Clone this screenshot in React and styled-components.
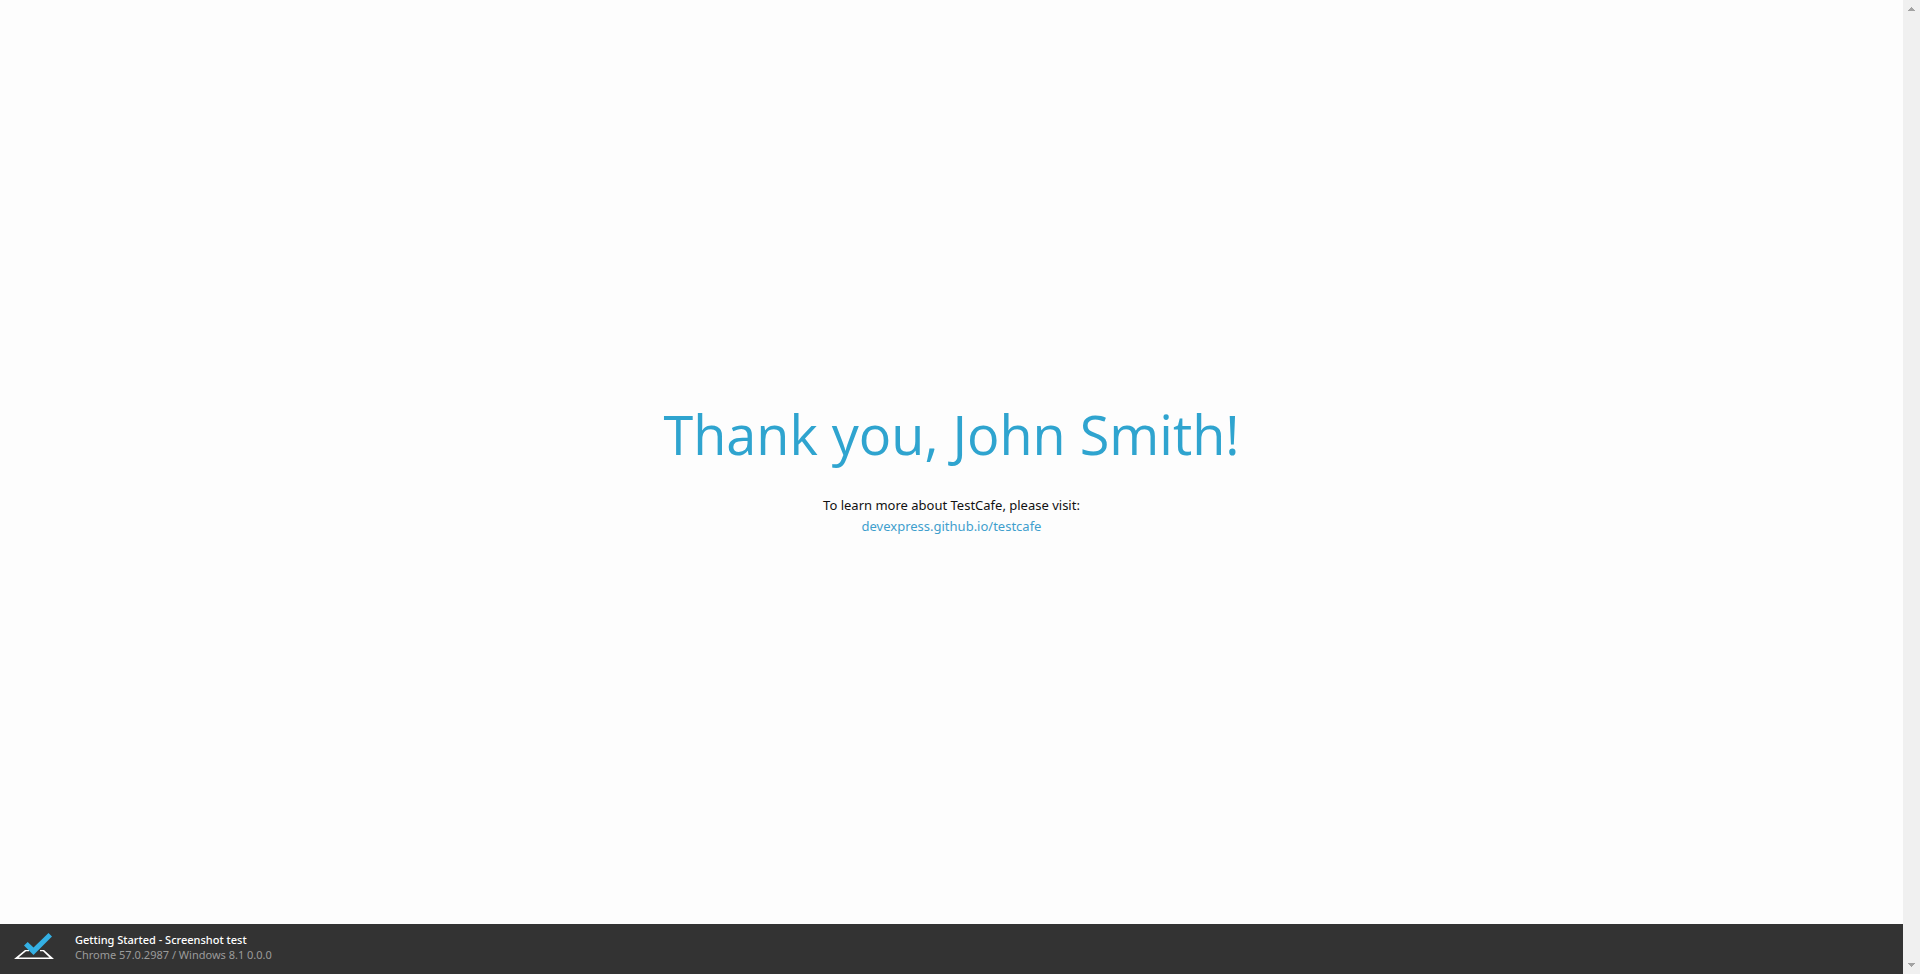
import React from 'react';
import styled, { createGlobalStyle } from 'styled-components';

const GlobalStyle = createGlobalStyle`
  body {
    margin: 0;
    background: #fdfdfd;
    color: #111;
    font-family: 'Open Sans', 'Noto Sans', sans-serif;
  }
`;

const Window = styled.div`
  display: flex;
  min-height: 100vh;
`;

const Page = styled.div`
  flex: 1;
  display: flex;
  flex-direction: column;
`;

const Content = styled.main`
  flex: 1;
  display: flex;
  flex-direction: column;
  align-items: center;
  justify-content: center;
  padding-top: 8px;
  text-align: center;
`;

const Title = styled.h1`
  margin: 0 0 23px;
  font-size: 54px;
  font-weight: 400;
  line-height: 76px;
  color: #2fa4cf;
`;

const Note = styled.p`
  margin: 0;
  font-family: 'Noto Sans', 'Open Sans', sans-serif;
  font-size: 13px;
  line-height: 21px;
`;

const SiteLink = styled.a`
  display: block;
  color: #3f9fcd;
  text-decoration: none;
`;

const StatusBar = styled.footer`
  display: flex;
  align-items: center;
  box-sizing: border-box;
  height: 50px;
  padding: 0 14px 5px;
  gap: 20px;
  background: #333;
`;

const Logo = styled.svg`
  display: block;
  width: 41px;
  height: 28px;
`;

const StatusText = styled.div`
  font-family: 'Noto Sans', 'Open Sans', sans-serif;
  font-size: 11px;
  line-height: 15px;
  color: #9b9b9b;
`;

const TestName = styled.div`
  font-weight: 500;
  color: #fff;
`;

const ScrollTrack = styled.div`
  width: 17px;
  box-sizing: border-box;
  padding: 7px 0;
  display: flex;
  flex-direction: column;
  align-items: center;
  justify-content: space-between;
  background: #f0f0f0;
`;

const Arrow = styled.svg`
  display: block;
  width: 7px;
  height: 4px;
  fill: #a3a3a3;
`;

export default function App() {
  return (
    <>
      <GlobalStyle />
      <Window>
        <Page>
          <Content>
            <Title>Thank you, John Smith!</Title>
            <Note>
              To learn more about TestCafe, please visit:
              <SiteLink href="https://devexpress.github.io/testcafe">devexpress.github.io/testcafe</SiteLink>
            </Note>
          </Content>
          <StatusBar>
            <Logo viewBox="0 0 41 28" aria-hidden="true">
              <path
                fill="#fff"
                fillRule="evenodd"
                d="M0 26L11 17H30L40 26ZM4.500 24.500H35.500L29 18.200H12Z"
              />
              <path fill="#333" d="M15 16H26V20H15Z" />
              <path fill="#34b0e4" d="M10 12.500L13.700 9L19.500 14.500L34.500 0L38 3.500L19.500 22Z" />
            </Logo>
            <StatusText>
              <TestName>Getting Started - Screenshot test</TestName>
              Chrome 57.0.2987 / Windows 8.1 0.0.0
            </StatusText>
          </StatusBar>
        </Page>
        <ScrollTrack aria-hidden="true">
          <Arrow viewBox="0 0 7 4" shapeRendering="crispEdges">
            <path d="M3 0h1v1h1v1h1v1h1v1H0V3h1V2h1V1h1z" />
          </Arrow>
          <Arrow viewBox="0 0 7 4" shapeRendering="crispEdges">
            <path d="M0 0h7v1H6v1H5v1H4v1H3V3H2V2H1V1H0z" />
          </Arrow>
        </ScrollTrack>
      </Window>
    </>
  );
}
